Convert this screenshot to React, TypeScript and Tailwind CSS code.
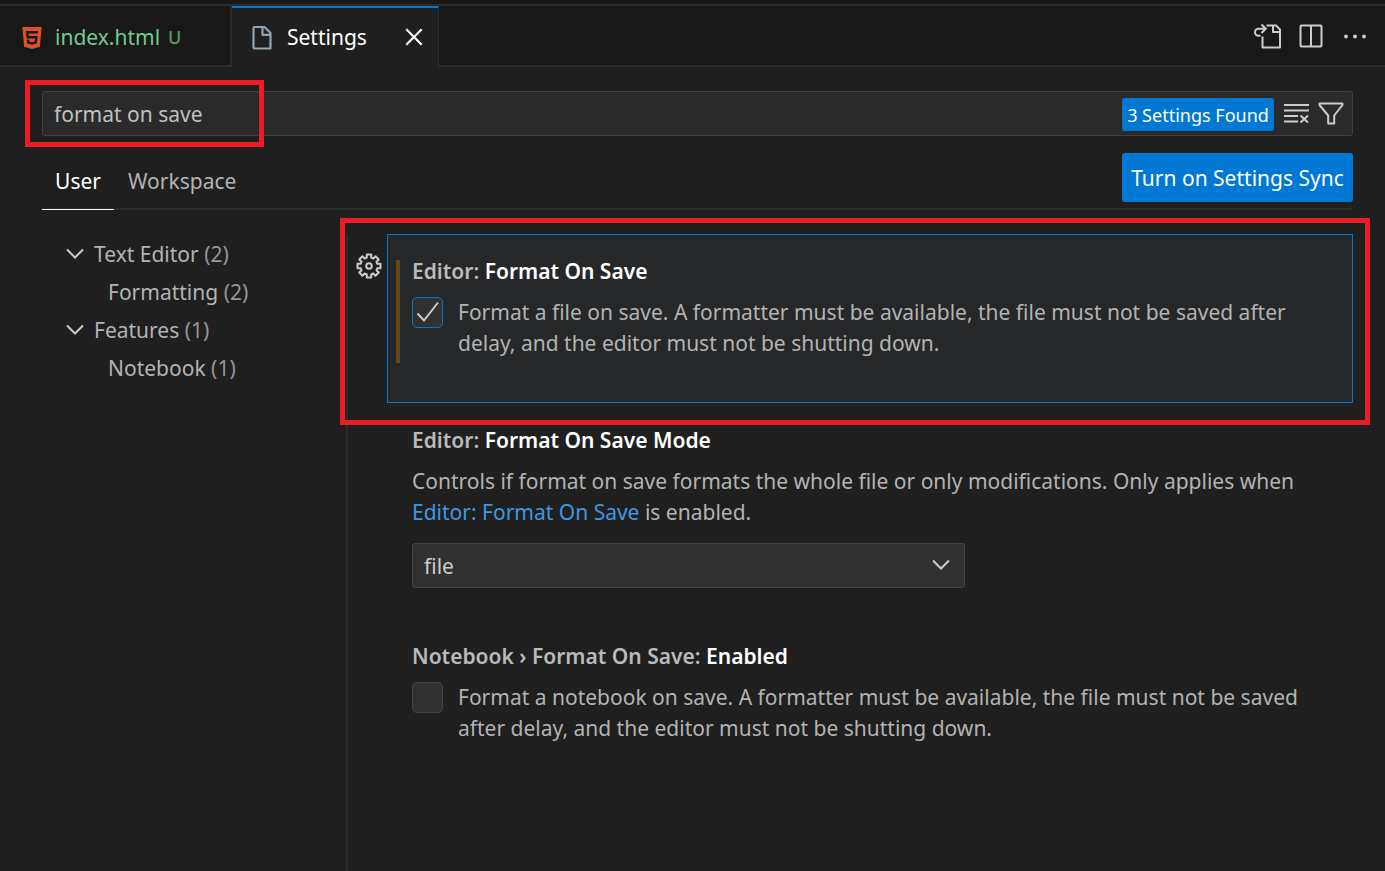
import { useState } from 'react';
import type { ReactNode } from 'react';
import { SiHtml5 } from 'react-icons/si';

function Icon({ children, className = '' }: { children: ReactNode; className?: string }) {
  return (
    <svg
      viewBox="0 0 28 28"
      fill="none"
      stroke="currentColor"
      strokeWidth="2"
      aria-hidden="true"
      className={'block size-7 shrink-0 ' + className}
    >
      {children}
    </svg>
  );
}

const ChevronDown = ({ className }: { className?: string }) => (
  <Icon className={className}>
    <path d="M6 9.5 14 17.5 22 9.5" />
  </Icon>
);

const FileIcon = () => (
  <Icon className="text-[#90a4ae]">
    <path strokeWidth="2.2" strokeLinejoin="round" d="M6.5 3H16.5L22.5 9V24.500H6.500A1 1 0 0 1 5.500 23.500V4A1 1 0 0 1 6.500 3ZM14.500 3V10.800H22.500" />
  </Icon>
);

const CloseIcon = () => (
  <Icon>
    <path strokeWidth="2.200" d="M6.300 6.300 21.700 21.700M21.700 6.300 6.300 21.700" />
  </Icon>
);

const GoToFile = () => (
  <Icon>
    <path strokeLinejoin="round" d="M13.500 3.500H23L27 7.500V25.500H9.500V14.500M20 3.500V10H27" />
    <path d="M8.500 2.500 12.800 6.800 8.500 11M12.500 6.800H5.500A3.500 3.500 0 0 0 5.500 13.800H7.500" />
  </Icon>
);

const SplitIcon = () => (
  <Icon>
    <rect x="3.500" y="3.500" width="21" height="21" rx="1" />
    <path d="M14 3.500V24.500" />
  </Icon>
);

const Ellipsis = () => (
  <Icon>
    <g fill="currentColor" stroke="none">
      <circle cx="5" cy="14.500" r="2" />
      <circle cx="14" cy="14.500" r="2" />
      <circle cx="23" cy="14.500" r="2" />
    </g>
  </Icon>
);

const ClearAll = () => (
  <Icon>
    <path d="M1 5H26M1 10.500H26M1 16H15M1 21.500H15M17.500 15.500 25 22.500M25 15.500 17.500 22.500" />
  </Icon>
);

const FilterIcon = () => (
  <Icon>
    <path strokeLinejoin="round" d="M2.500 3.500H25.500V5L17.200 15.500V23.500H11.200V15.500L2.500 5Z" />
  </Icon>
);

const CheckIcon = () => (
  <Icon className="pointer-events-none absolute top-px left-0.5">
    <path d="M3.500 15.500 10 22.500 24 4.500" />
  </Icon>
);

const GEAR_POINTS = Array.from({ length: 8 }, (_, tooth) =>
  [
    [-15, 8.6],
    [-11, 11.700],
    [11, 11.700],
    [15, 8.6],
  ].map(([offset, radius]) => {
    const angle = ((tooth * 45 + offset) * Math.PI) / 180;
    return `${(14 + radius * Math.sin(angle)).toFixed(2)},${(14 - radius * Math.cos(angle)).toFixed(2)}`;
  }),
)
  .flat()
  .join(' ');

const GearIcon = () => (
  <Icon>
    <polygon points={GEAR_POINTS} strokeLinejoin="round" />
    <circle cx="14" cy="14" r="2.800" />
  </Icon>
);

function TabBar() {
  return (
    <header className="flex h-[61px] items-stretch bg-[#181818]">
      <div className="flex w-[232px] items-center border-r-2 border-b-2 border-[#2b2b2b] pt-1 pl-[21px]">
        <SiHtml5 className="size-[22px] text-[#e44d26]" />
        <a href="#index" className="ml-3 text-[21px] text-[#73c991]">
          index.html
        </a>
        <span className="ml-2 text-[18px] font-medium text-[#5a9a70]">U</span>
      </div>
      <div className="flex w-[207px] items-center border-t-2 border-r border-t-[#0078d4] border-r-[#2b2b2b] bg-[#1f1f1f] pl-4 text-white">
        <FileIcon />
        <a href="#settings" className="ml-[11px] text-[21px]">
          Settings
        </a>
        <button aria-label="Close" className="mr-2.5 mb-0.5 ml-auto">
          <CloseIcon />
        </button>
      </div>
      <div className="flex flex-1 items-center justify-end gap-4 border-b-2 border-[#2b2b2b] pr-4 text-[#cccccc]">
        <button aria-label="Open Settings (JSON)">
          <GoToFile />
        </button>
        <button aria-label="Split Editor">
          <SplitIcon />
        </button>
        <button aria-label="More Actions">
          <Ellipsis />
        </button>
      </div>
    </header>
  );
}

function SearchBar() {
  const [query, setQuery] = useState('format on save');
  return (
    <div className="relative flex h-[45px] items-center rounded-[3px] border border-[#404040] bg-[#2a2a2a] pr-[7px] pl-[11px]">
      <input
        aria-label="Search settings"
        value={query}
        onChange={(e) => setQuery(e.target.value)}
        className="min-w-0 flex-1 bg-transparent pt-0.5 text-[21px] text-[#c0c0c0] outline-none"
      />
      <span className="mt-0.5 flex h-[33px] w-[152px] items-center justify-center rounded-[3px] bg-[#0078d4] pt-0.5 text-[18px] whitespace-nowrap text-white">
        3 Settings Found
      </span>
      <button aria-label="Clear Settings Search Input" className="ml-[9px] text-[#cccccc]">
        <ClearAll />
      </button>
      <button aria-label="Filter Settings" className="ml-1.5 text-[#cccccc]">
        <FilterIcon />
      </button>
      <div className="pointer-events-none absolute -top-3 -left-[18px] h-[67px] w-[239px] border-[5px] border-[#ed1c24]" />
    </div>
  );
}

function Branch({ label, count, open }: { label: string; count: number; open?: boolean }) {
  return (
    <li>
      <button className="flex h-[38px] items-center">
        {open ? <ChevronDown className="mr-[5px] text-[#cccccc]" /> : <span className="w-[47px]" />}
        <span className="pt-0.5">
          {label} <span className="text-[#969696]">({count})</span>
        </span>
      </button>
    </li>
  );
}

function Title({ category, name }: { category: string; name: string }) {
  return (
    <h2 className="text-[21px] leading-8 font-semibold text-[#bababa]">
      {category} <span className="text-white">{name}</span>
    </h2>
  );
}

function Check({ id, initial, focused, children }: { id: string; initial: boolean; focused?: boolean; children: ReactNode }) {
  const [on, setOn] = useState(initial);
  return (
    <div className="mt-2.5 flex gap-[15px]">
      <span className="relative size-[31px] shrink-0">
        <input
          id={id}
          type="checkbox"
          checked={on}
          onChange={() => setOn(!on)}
          className={
            focused
              ? 'block size-[31px] appearance-none rounded-[5px] border border-[#0078d4] bg-[#313131]'
              : 'block size-[31px] appearance-none rounded-[5px] border border-[#454545] bg-[#313131]'
          }
        />
        {on && (
          <span className="text-[#cccccc]">
            <CheckIcon />
          </span>
        )}
      </span>
      <label htmlFor={id} className="leading-[31px]">
        {children}
      </label>
    </div>
  );
}

export default function App() {
  return (
    <div className="flex min-h-screen flex-col bg-[#1f1f1f] font-['Noto_Sans','Open_Sans',sans-serif] text-[21px] text-[#b3b3b3]">
      <div className="h-1.5 border-b-2 border-[#2b2b2b] bg-[#181818]" />
      <TabBar />
      <main className="flex flex-1 flex-col pt-6 pr-8 pl-[42px]">
        <SearchBar />
        <div className="mt-[17px] flex h-[57px] items-start justify-between border-b-2 border-[#2b2b2b]">
          <nav className="flex h-[57px]">
            <button className="w-[72px] border-b border-white pt-0.5 text-white">User</button>
            <button className="ml-3.5">Workspace</button>
          </nav>
          <button className="h-[49px] w-[231px] rounded-[3px] bg-[#0078d4] pt-0.5 whitespace-nowrap text-white">
            Turn on Settings Sync
          </button>
        </div>
        <div className="mt-6 flex flex-1">
          <aside className="w-[304px] shrink-0 pt-px pl-[19px]">
            <ul>
              <Branch label="Text Editor" count={2} open />
              <Branch label="Formatting" count={2} />
              <Branch label="Features" count={1} open />
              <Branch label="Notebook" count={1} />
            </ul>
          </aside>
          <div className="min-w-0 flex-1 border-l-2 border-[#2b2b2b]">
            <section className="relative flex">
              <button aria-label="More Actions" className="mt-[18px] h-7 w-[39px] shrink-0 pl-[7px] text-[#cccccc]">
                <GearIcon />
              </button>
              <div className="relative min-w-0 flex-1 border border-[#0078d4] bg-[#262729] px-6 pt-5 pb-[43px]">
                <div className="absolute top-[25px] left-2 h-[103px] w-1 bg-[#66491a]" />
                <Title category="Editor:" name="Format On Save" />
                <Check id="editor-format" initial focused>
                  Format a file on save. A formatter must be available, the file must not be saved after delay, and the
                  editor must not be shutting down.
                </Check>
              </div>
              <div className="pointer-events-none absolute -top-4 -right-[17px] -bottom-[22px] -left-2 z-10 border-[5px] border-[#ed1c24]" />
            </section>
            <section className="pt-[21px] pr-6 pb-[31px] pl-16">
              <Title category="Editor:" name="Format On Save Mode" />
              <p className="mt-2.5 leading-[31px]">
                Controls if format on save formats the whole file or only modifications. Only applies when{' '}
                <a href="#editor-format" className="text-[#4097e3]">
                  Editor: Format On Save
                </a>{' '}
                is enabled.
              </p>
              <div className="relative mt-[15px] max-w-[553px]">
                <select
                  aria-label="Format On Save Mode"
                  className="block h-[45px] w-full appearance-none rounded-[3px] border border-[#454545] bg-[#313131] px-[11px] pt-0.5 text-[#cccccc]"
                >
                  <option>file</option>
                  <option>modifications</option>
                  <option>modificationsIfAvailable</option>
                </select>
                <ChevronDown className="pointer-events-none absolute top-2 right-2.5 text-[#cccccc]" />
              </div>
            </section>
            <section className="pt-[21px] pr-6 pb-11 pl-16">
              <Title category="Notebook › Format On Save:" name="Enabled" />
              <Check id="notebook-format" initial={false}>
                Format a notebook on save. A formatter must be available, the file must not be saved after delay, and
                the editor must not be shutting down.
              </Check>
            </section>
          </div>
        </div>
      </main>
    </div>
  );
}
